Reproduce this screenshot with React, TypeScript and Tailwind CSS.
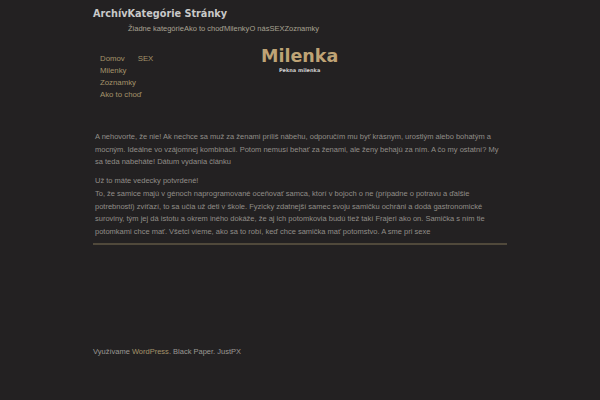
const font = { fontFamily: '"Liberation Sans", Arial, sans-serif' };
const dejavu = { fontFamily: '"DejaVu Sans", Verdana, sans-serif' };

function Header() {
  return (
    <div className="pt-[7px]">
      <div className="text-[9.7px] leading-[14px] font-bold text-[#c9c9c9]" style={dejavu}>
        <span>Archív</span>
        <span>Kategórie</span> <span>Stránky</span>
      </div>
      <div className="mt-[2px] pl-[35px] text-[7.5px] leading-[12px] text-[#a8a292]">
        <span>Žiadne kategórie</span>
        <a>Ako to choď</a>
        <a>Milenky</a>
        <a>O nás</a>
        <a>SEX</a>
        <a>Zoznamky</a>
      </div>
    </div>
  );
}

function Masthead() {
  return (
    <div className="mt-[7px] flex">
      <ul className="mt-[11px] ml-[7px] w-[70px] text-[7.8px] leading-[12px] text-[#a3936a]">
        <li className="flex gap-[13px]">
          <a>Domov</a>
          <a>SEX</a>
        </li>
        <li>Milenky</li>
        <li>Zoznamky</li>
        <li>Ako to choď</li>
      </ul>
      <div className="mt-[3px] ml-[91px] flex flex-col items-center">
        <h1 className="text-[17.5px] leading-[22px] font-bold text-[#bea375]" style={dejavu}>
          Milenka
        </h1>
        <p className="text-[5px] leading-[7px] font-bold text-[#cfcfcf]" style={dejavu}>
          Pekna milenka
        </p>
      </div>
    </div>
  );
}

function Post() {
  return (
    <div className="mt-[30px] px-[2px] text-[7.5px] leading-[12.7px] text-[#918d88]">
      <p>
        A nehovorte, že nie! Ak nechce sa muž za ženami príliš nábehu, odporučím mu byť krásnym, urostlým alebo bohatým a
        mocným. Ideálne vo vzájomnej kombinácii. Potom nemusí behať za ženami, ale ženy behajú za ním. A čo my ostatní? My
        sa teda nabeháte! Dátum vydania článku
      </p>
      <p className="mt-[6px]">
        Už to máte vedecky potvrdené!
        <br />
        To, že samice majú v génoch naprogramované oceňovať samca, ktorí v bojoch o ne (prípadne o potravu a ďalšie
        potrebnosti) zvíťazí, to sa učia už deti v škole. Fyzicky zdatnejší samec svoju samičku ochráni a dodá gastronomické
        suroviny, tým jej dá istotu a okrem iného dokáže, že aj ich potomkovia budú tiež takí Frajeri ako on. Samička s ním tie
        potomkami chce mať. Všetci vieme, ako sa to robí, keď chce samička mať potomstvo. A sme pri sexe
      </p>
      <div className="mt-[4px] -mx-[2px] h-[2px] bg-[#50493b]" />
    </div>
  );
}

export default function App() {
  return (
    <div className="min-h-[400px] w-[600px] bg-[#232122]" style={font}>
      <div className="mx-auto w-[414px]">
        <Header />
        <Masthead />
        <Post />
        <div className="mt-[101px] text-[7.5px] leading-[12px] text-[#9a9893]">
          Využívame <a className="text-[#a3936a]">WordPress</a>. Black Paper. JustPX
        </div>
      </div>
    </div>
  );
}
